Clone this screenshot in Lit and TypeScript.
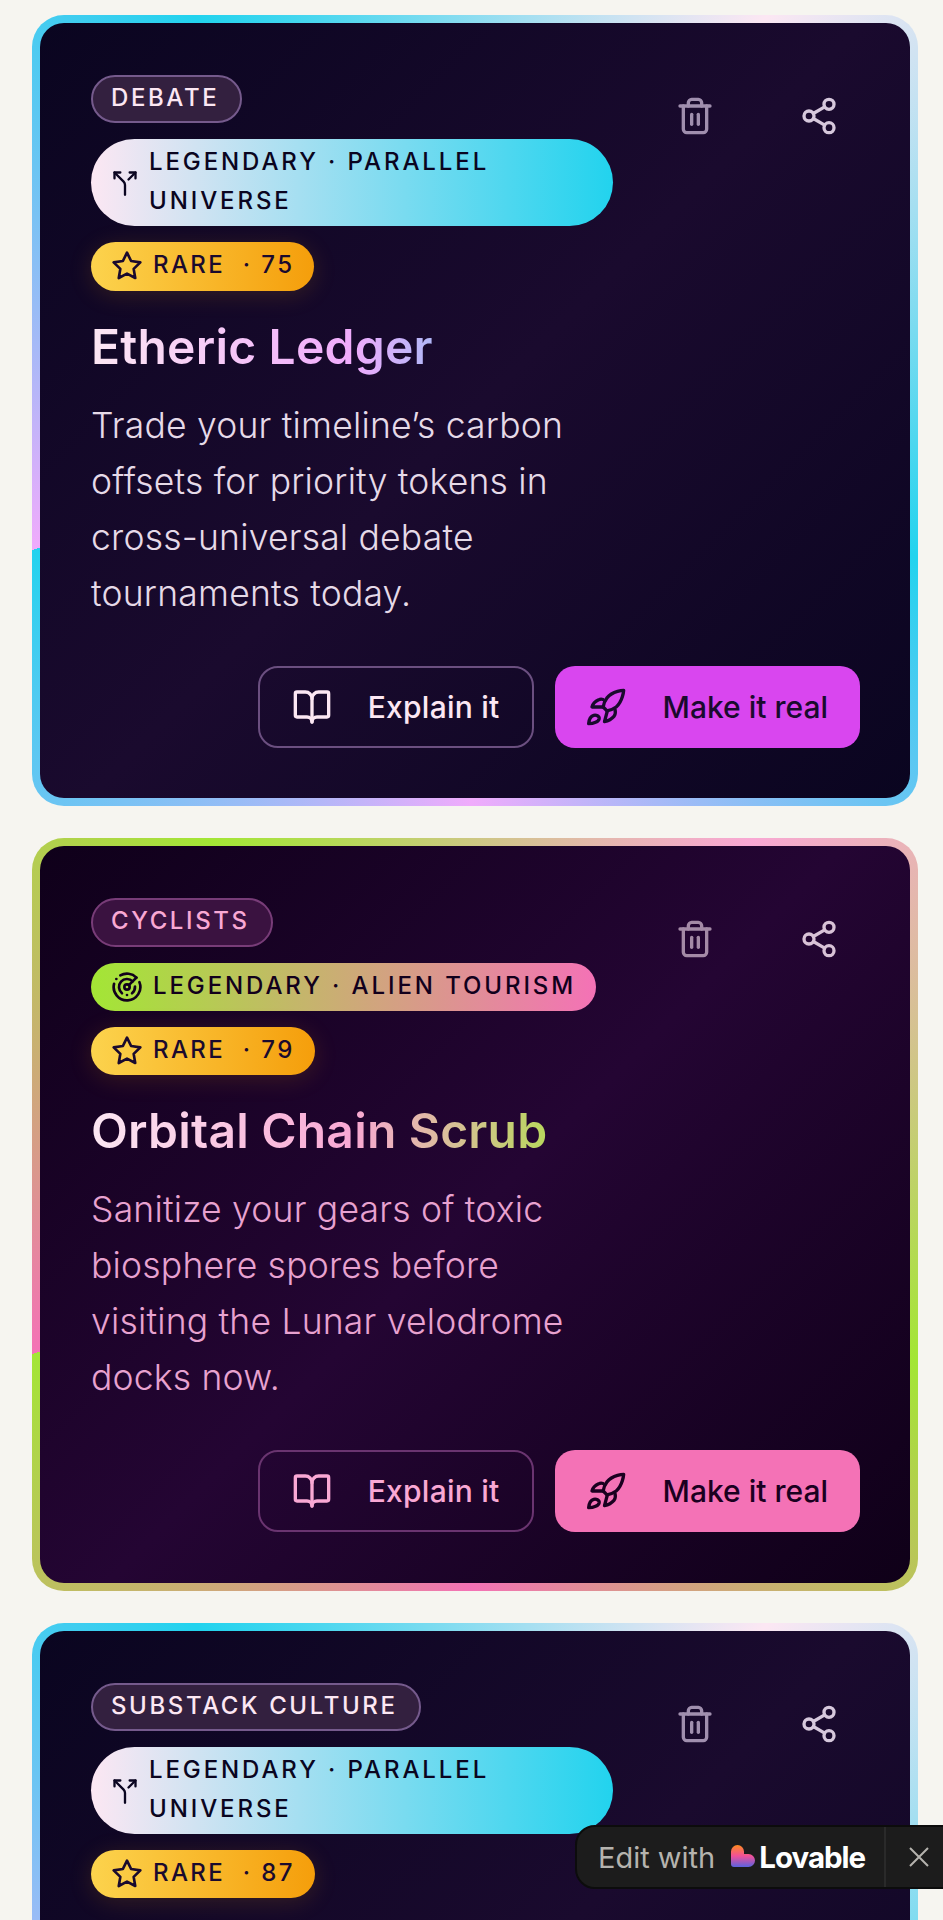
import { LitElement, html, css, svg } from "lit";
import { customElement } from "lit/decorators.js";

const icon = (size: number, body: unknown, cls = "") => html`<svg class="ic ${cls}" width=${size} height=${size} viewBox="0 0 24 24" fill="none" stroke="currentColor" stroke-width="2" stroke-linecap="round" stroke-linejoin="round">${body}</svg>`;

const I = {
  split: svg`<path d="M16 3h5v5"/><path d="M8 3H3v5"/><path d="M12 22v-8.3a4 4 0 0 0-1.172-2.872L3 3"/><path d="m15 9 6-6"/>`,
  radar: svg`<path d="M19.07 4.93A10 10 0 0 0 6.99 3.34"/><path d="M4 6h.01"/><path d="M2.29 9.62A10 10 0 1 0 21.31 8.35"/><path d="M16.24 7.76A6 6 0 1 0 8.23 16.67"/><path d="M12 18h.01"/><path d="M17.99 11.66A6 6 0 0 1 15.77 16.67"/><circle cx="12" cy="12" r="2"/><path d="m13.41 10.59 5.66-5.66"/>`,
  star: svg`<polygon points="12 2 15.09 8.26 22 9.27 17 14.14 18.18 21.02 12 17.77 5.82 21.02 7 14.14 2 9.27 8.91 8.26 12 2"/>`,
  trash: svg`<path d="M3 6h18"/><path d="M19 6v14c0 1-1 2-2 2H7c-1 0-2-1-2-2V6"/><path d="M8 6V4c0-1 1-2 2-2h4c1 0 2 1 2 2v2"/><line x1="10" x2="10" y1="11" y2="17"/><line x1="14" x2="14" y1="11" y2="17"/>`,
  share: svg`<circle cx="18" cy="5" r="3"/><circle cx="6" cy="12" r="3"/><circle cx="18" cy="19" r="3"/><line x1="8.59" x2="15.42" y1="13.51" y2="17.49"/><line x1="15.41" x2="8.59" y1="6.51" y2="10.49"/>`,
  book: svg`<path d="M12 7v14"/><path d="M3 18a1 1 0 0 1-1-1V4a1 1 0 0 1 1-1h5a4 4 0 0 1 4 4 4 4 0 0 1 4-4h5a1 1 0 0 1 1 1v13a1 1 0 0 1-1 1h-6a3 3 0 0 0-3 3 3 3 0 0 0-3-3z"/>`,
  rocket: svg`<path d="M22 2C22 2 15.5 2.3 12 6.5 10.5 8.3 10 10 9.7 12L12 14.3C14 14 15.7 13.3 17.5 12 21.5 8.5 22 2 22 2z"/><path d="M9.6 7.5C8.8 7.2 7.9 7.2 7 7.7 5 8.6 3.5 10 3 12H9.7"/><path d="M12.2 14.4 10.5 20.8C13 20.3 15 19 16.3 17.5 17 16.5 17.2 15 16.8 13.5"/><path d="M1 22C1.2 19.5 2.3 17.5 4 17 5.5 16.5 7.5 17.5 7.3 19 7 20.8 4 22 1 22z"/>`,
};

interface Card {
  theme: string;
  tag: string;
  legendary: string;
  legIcon: unknown;
  legSize: number;
  score: number;
  title?: string;
  desc?: string;
}

const cards: Card[] = [
  { theme: "ice", tag: "DEBATE", legendary: "LEGENDARY · PARALLEL UNIVERSE", legIcon: I.split, legSize: 28, score: 75, title: "Etheric Ledger", desc: "Trade your timeline’s carbon offsets for priority tokens in cross-universal debate tournaments today." },
  { theme: "lime", tag: "CYCLISTS", legendary: "LEGENDARY · ALIEN TOURISM", legIcon: I.radar, legSize: 32, score: 79, title: "Orbital Chain Scrub", desc: "Sanitize your gears of toxic biosphere spores before visiting the Lunar velodrome docks now." },
  { theme: "ice", tag: "SUBSTACK CULTURE", legendary: "LEGENDARY · PARALLEL UNIVERSE", legIcon: I.split, legSize: 28, score: 87 },
];

@customElement("app-root")
export class AppRoot extends LitElement {
  static styles = css`
    :host { display: block; position: relative; height: 1920px; overflow: hidden; background: #f6f5f0; font-family: "Inter", "Noto Sans", sans-serif; }
    .page { display: flex; flex-direction: column; gap: 32px; padding: 15px 25px 0 32px; }
    .card { border-radius: 32px; padding: 8px; }
    .ice {
      --bd: conic-gradient(from 252.5deg, #f0abfc, #22d3ee, #fce7f3, #22d3ee, #f0abfc, #22d3ee);
      --bg: linear-gradient(135deg, #0a0520 0%, #1a0a2e 50%, #0a0520 100%);
      --tag-bg: #33203f; --tag-bd: #755a8c; --tag-fg: #fce7f3;
      --leg: linear-gradient(90deg, #fce7f3, #22d3ee);
      --ink: #0a0520;
      --title: linear-gradient(90deg, #fce7f3, #f0abfc 50%, #22d3ee);
      --desc: #e6dae8; --ex-fg: #fce7f3; --ex-bd: #6b4f80; --act: #d946ef; --act-fg: #1a0a2e;
      --trash: #a08fae; --share: #d6c8dc;
    }
    .lime {
      --bd: conic-gradient(from 252.5deg, #f472b6, #a3e635, #f9a8d4, #a3e635, #f472b6, #a3e635);
      --bg: linear-gradient(135deg, #0f001a 0%, #240533 50%, #0f0018 100%);
      --tag-bg: #3a1240; --tag-bd: #783c78; --tag-fg: #f9a8d4;
      --leg: linear-gradient(90deg, #a3e635, #f472b6);
      --ink: #12001c;
      --title: linear-gradient(90deg, #fce7f3, #f9a8d4 50%, #a3e635);
      --desc: #e8a2d0; --ex-fg: #f9a8d4; --ex-bd: #6a3470; --act: #f472b6; --act-fg: #1a0020;
      --trash: #a48aa6; --share: #d8c2d6;
    }
    .card { background: var(--bd); }
    .inner { background: var(--bg); border-radius: 24px; padding: 52px 50px 50.5px 51px; }
    .inner.tall { min-height: 673px; }
    .top { display: flex; gap: 41px; align-items: flex-start; }
    .main { flex: 1; min-width: 0; display: flex; flex-direction: column; align-items: flex-start; }
    .pills { display: flex; flex-direction: column; gap: 16px; align-items: flex-start; }
    .pill { display: inline-flex; align-items: center; border-radius: 999px; font-size: 24px; line-height: 38.4px; font-weight: 500; letter-spacing: 2.4px; white-space: pre-wrap; }
    .lbl { transform: translateY(-1px); }
    .tag { padding: 3px 21px 3px 18px; border: 2px solid var(--tag-bd); background: var(--tag-bg); color: var(--tag-fg); letter-spacing: 2.6px; }
    .leg { padding: 5px 20px; background: var(--leg); color: var(--ink); gap: 10px; letter-spacing: 2.9px; }
    .rare { padding: 5px 20px; background: linear-gradient(90deg, #fcd34d, #f59e0b); color: #1a0a2e; gap: 10px; box-shadow: 0 4px 24px rgba(245, 158, 11, .15); }
    .ic { flex: none; display: block; }
    h2 { margin: 24px 0 0; font-size: 48px; line-height: 64px; font-weight: 600; letter-spacing: .2px; width: 100%; background: var(--title); -webkit-background-clip: text; background-clip: text; color: transparent; }
    p { margin: 19px 0 0; font-size: 35.5px; line-height: 56px; font-weight: 300; letter-spacing: .2px; color: var(--desc); }
    .actions { display: flex; gap: 42px; flex: none; }
    .iconbtn { width: 82px; height: 82px; display: flex; align-items: center; justify-content: center; background: none; border: 0; padding: 0; }
    .iconbtn.t { color: var(--trash); }
    .iconbtn.s { color: var(--share); }
    .foot { display: flex; justify-content: flex-end; gap: 21px; margin-top: 44px; }
    .btn { height: 82px; box-sizing: border-box; display: flex; align-items: center; gap: 36px; padding: 0 32px; border-radius: 20px; font: inherit; font-size: 30px; font-weight: 500; }
    .ex { background: none; border: 2px solid var(--ex-bd); color: var(--ex-fg); letter-spacing: .25px; }
    .mk { background: var(--act); border: 0; color: var(--act-fg); }
    .badge { position: absolute; left: 575px; top: 1825px; width: 400px; height: 60px; display: flex; align-items: center; background: #1c1c1c; border: 2px solid #0c0c0c; border-radius: 20px; color: #b5b3ae; font-size: 29px; }
    .edit { margin-left: 21px; }
    .logo { margin-left: 16px; display: block; }
    .brand { margin-left: 4px; color: #fff; font-weight: 700; font-size: 29.5px; letter-spacing: -1px; }
    .div { align-self: stretch; width: 2px; background: #2a2a2a; margin-left: 19px; }
    .x { margin-left: 21px; color: #b5b3ae; }
  `;

  private card(c: Card) {
    return html`<article class="card ${c.theme}"><div class="inner ${c.title ? "" : "tall"}">
      <div class="top">
        <div class="main">
          <div class="pills">
            <span class="pill tag"><span class="lbl">${c.tag}</span></span>
            <span class="pill leg">${icon(c.legSize, c.legIcon)}<span class="lbl">${c.legendary}</span></span>
            <span class="pill rare">${icon(32, I.star)}<span class="lbl">RARE  · ${c.score}</span></span>
          </div>
          ${c.title ? html`<h2>${c.title}</h2>` : ""}
          ${c.desc ? html`<p>${c.desc}</p>` : ""}
        </div>
        <div class="actions">
          <button class="iconbtn t">${icon(40, I.trash)}</button>
          <button class="iconbtn s">${icon(40, I.share)}</button>
        </div>
      </div>
      ${c.title ? html`<div class="foot">
        <button class="btn ex">${icon(40, I.book)}<span>Explain it</span></button>
        <button class="btn mk">${icon(40, I.rocket)}<span>Make it real</span></button>
      </div>` : ""}
    </div></article>`;
  }

  render() {
    return html`<div class="page">${cards.map((c) => this.card(c))}</div>
      <div class="badge">
        <span class="edit">Edit with</span>
        <svg class="logo" width="24" height="24" viewBox="0 0 24 24"><defs><linearGradient id="lv" x1="0" y1="0" x2="0" y2="1"><stop offset="0" stop-color="#ff8a1e"/><stop offset=".5" stop-color="#f0509a"/><stop offset="1" stop-color="#5a62e0"/></linearGradient></defs><path fill="url(#lv)" d="M0 6.5a6.5 6.5 0 0 1 13 0V9h4.5a6.5 6.5 0 0 1 0 13H3a3 3 0 0 1-3-3z"/></svg>
        <span class="brand">Lovable</span>
        <span class="div"></span>
        <svg class="x" width="24" height="24" viewBox="0 0 24 24" fill="none" stroke="currentColor" stroke-width="2"><path d="M3 3l18 18M21 3L3 21"/></svg>
      </div>`;
  }
}
